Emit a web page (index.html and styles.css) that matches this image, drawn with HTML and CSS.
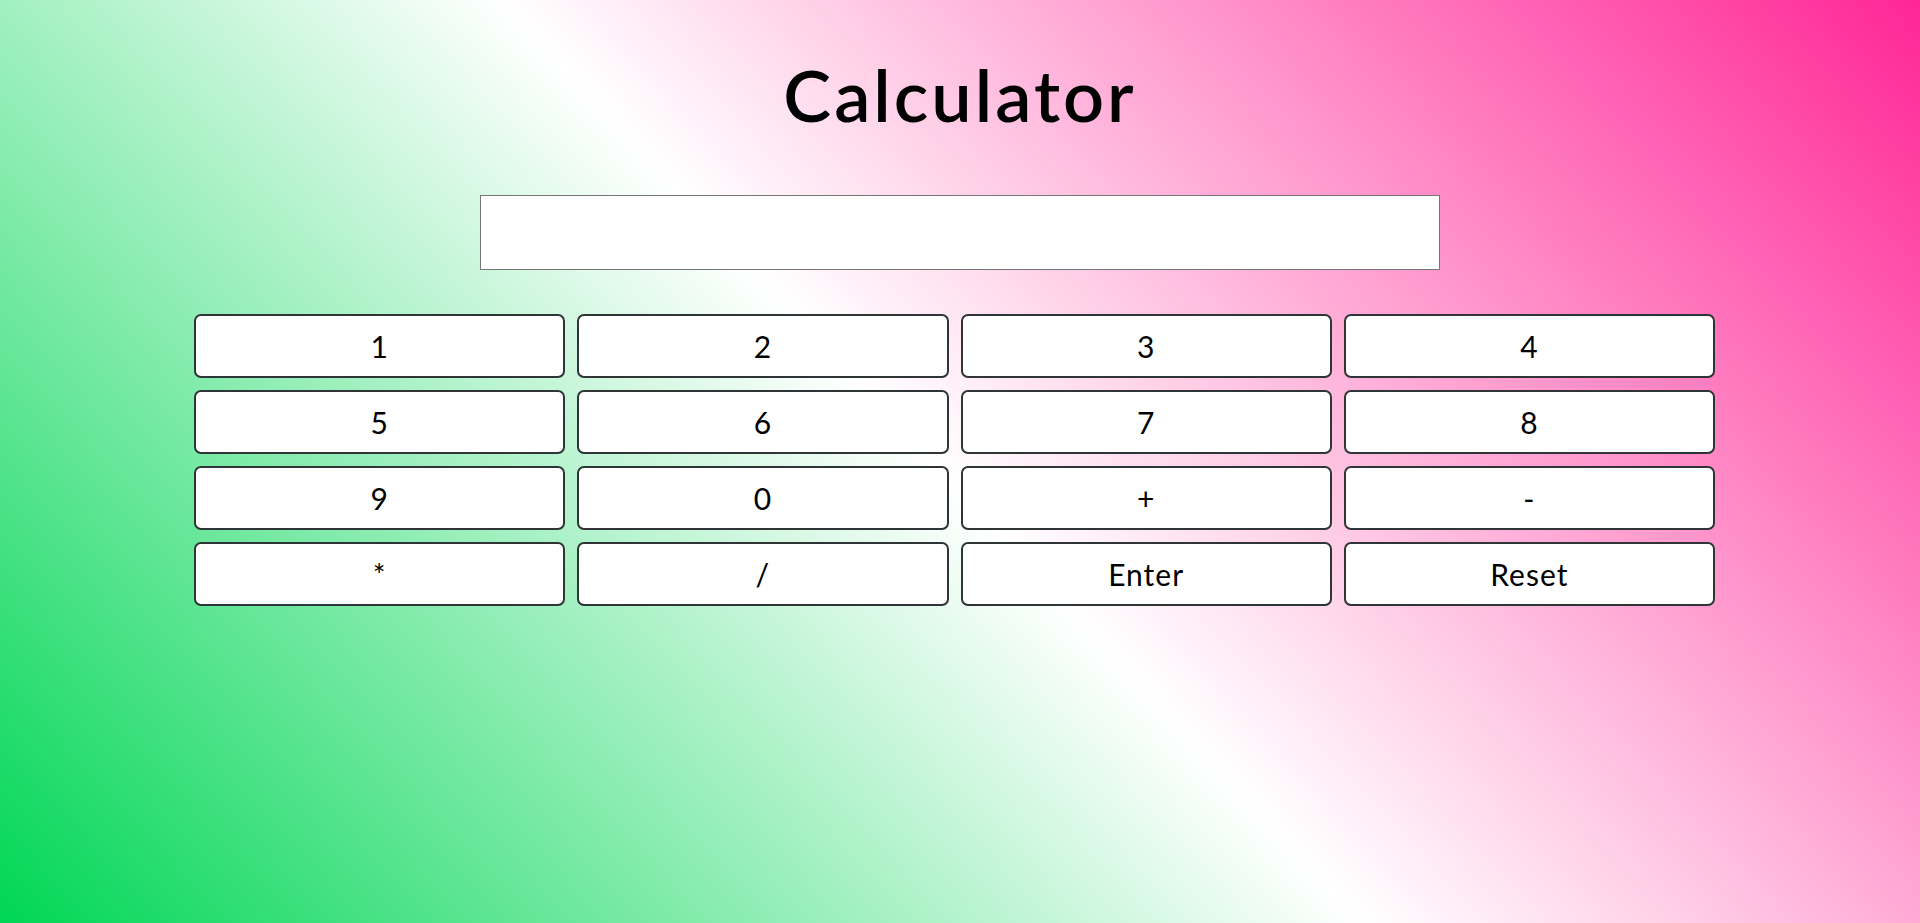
FILE: index.html
```html
<!DOCTYPE html>
<html lang="en">
<head>
<meta charset="utf-8">
<title>Calculator</title>
<link rel="stylesheet" href="styles.css">
</head>
<body>
  <main class="page">
    <h1 class="title">Calculator</h1>
    <input class="display" type="text">
    <div class="keys">
      <button class="key">1</button>
      <button class="key">2</button>
      <button class="key">3</button>
      <button class="key">4</button>
      <button class="key">5</button>
      <button class="key">6</button>
      <button class="key">7</button>
      <button class="key">8</button>
      <button class="key">9</button>
      <button class="key">0</button>
      <button class="key">+</button>
      <button class="key">-</button>
      <button class="key">*</button>
      <button class="key">/</button>
      <button class="key">Enter</button>
      <button class="key">Reset</button>
    </div>
  </main>
</body>
</html>
```
FILE: styles.css
```css
html, body {
  margin: 0;
  height: 100%;
}
body {
  background: linear-gradient(47deg, #00d655 0%, #ffffff 49%, #ff2696 100%);
  font-family: Lato, "Noto Sans", sans-serif;
  color: #000;
}
.page {
  display: flex;
  flex-direction: column;
  align-items: center;
}
.title {
  margin: 0;
  padding-top: 51px;
  font-size: 72px;
  font-weight: 600;
  line-height: normal;
  letter-spacing: 3px;
}
.display {
  box-sizing: border-box;
  margin-top: 58px;
  width: 960px;
  height: 75px;
  border: 1px solid #767676;
  background: #fff;
  font-size: 28px;
  padding: 0 10px;
}
.keys {
  align-self: flex-start;
  margin: 44px 0 0 194px;
  width: 1521px;
  display: grid;
  grid-template-columns: repeat(4, 1fr);
  column-gap: 12px;
  row-gap: 12px;
}
.key {
  box-sizing: border-box;
  height: 64px;
  background: #fff;
  border: 2px solid #2f3436;
  border-radius: 7px;
  font-family: Lato, "Noto Sans", sans-serif;
  font-size: 30px;
  font-weight: 400;
  color: #000;
  padding: 0;
  letter-spacing: 1px;
}
```
